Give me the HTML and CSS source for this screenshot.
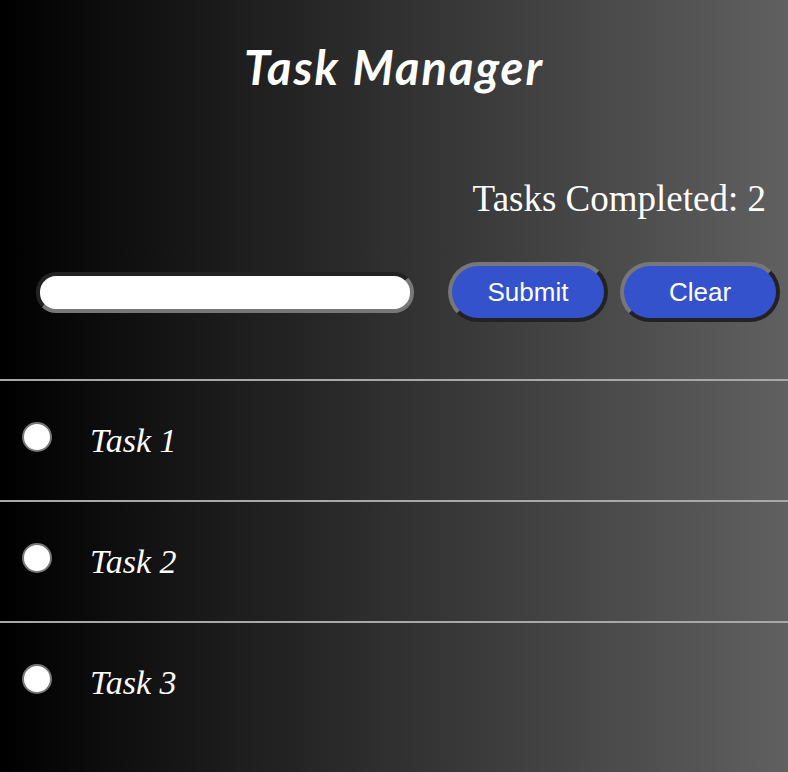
FILE: index.html
```html
<!DOCTYPE html>
<html>
<head>
<meta charset="utf-8">
<link rel="stylesheet" href="styles.css">
</head>
<body>
<div class="app">
  <h1 class="title">Task Manager</h1>
  <div class="counter">Tasks Completed: 2</div>
  <form class="controls">
    <input class="task-input" type="text">
    <button class="btn" type="button">Submit</button>
    <button class="btn" type="button">Clear</button>
  </form>
  <ul class="tasks">
    <li class="task"><span class="radio"></span><span class="task-text">Task 1</span></li>
    <li class="task"><span class="radio"></span><span class="task-text">Task 2</span></li>
    <li class="task"><span class="radio"></span><span class="task-text">Task 3</span></li>
  </ul>
</div>
</body>
</html>
```
FILE: styles.css
```css
html, body {
  margin: 0;
  padding: 0;
}
body {
  min-height: 100vh;
  background: linear-gradient(to right, #000000 0%, #606060 100%);
  color: #fff;
  font-family: "Liberation Serif", serif;
  overflow: hidden;
}
.app {
  display: flex;
  flex-direction: column;
}
.title {
  margin: 39px 0 0 0;
  text-align: center;
  font-family: "Lato", sans-serif;
  font-style: italic;
  font-weight: 700;
  font-size: 47px;
  line-height: 56px;
  letter-spacing: 2px;
}
.counter {
  margin-top: 82px;
  padding-right: 22px;
  text-align: right;
  font-size: 37px;
  line-height: 44px;
}
.controls {
  display: flex;
  align-items: center;
  margin: 41px 0 0 0;
  padding-left: 36px;
}
.task-input {
  flex-shrink: 0;
  box-sizing: border-box;
  width: 378px;
  height: 41px;
  margin: 0 34px 0 0;
  border: 4px inset #777;
  border-radius: 20px;
  background: #fff;
}
.btn {
  flex-shrink: 0;
  box-sizing: border-box;
  width: 160px;
  height: 60px;
  margin: 0;
  border: 4px outset #777;
  border-radius: 30px;
  background: #3452cc;
  color: #fff;
  font-family: "Liberation Sans", sans-serif;
  font-size: 26px;
}
.btn + .btn {
  margin-left: 12px;
}
.tasks {
  list-style: none;
  margin: 57px 0 0 0;
  padding: 0;
}
.task {
  display: flex;
  align-items: center;
  height: 121px;
  border-top: 2px solid #a8a8a8;
  box-sizing: border-box;
  padding-left: 22px;
}
.radio {
  box-sizing: border-box;
  width: 30px;
  height: 30px;
  border-radius: 50%;
  background: #fff;
  border: 2px solid #777;
  margin-top: -8px;
}
.task-text {
  margin-left: 38px;
  font-style: italic;
  font-size: 34px;
}
```
